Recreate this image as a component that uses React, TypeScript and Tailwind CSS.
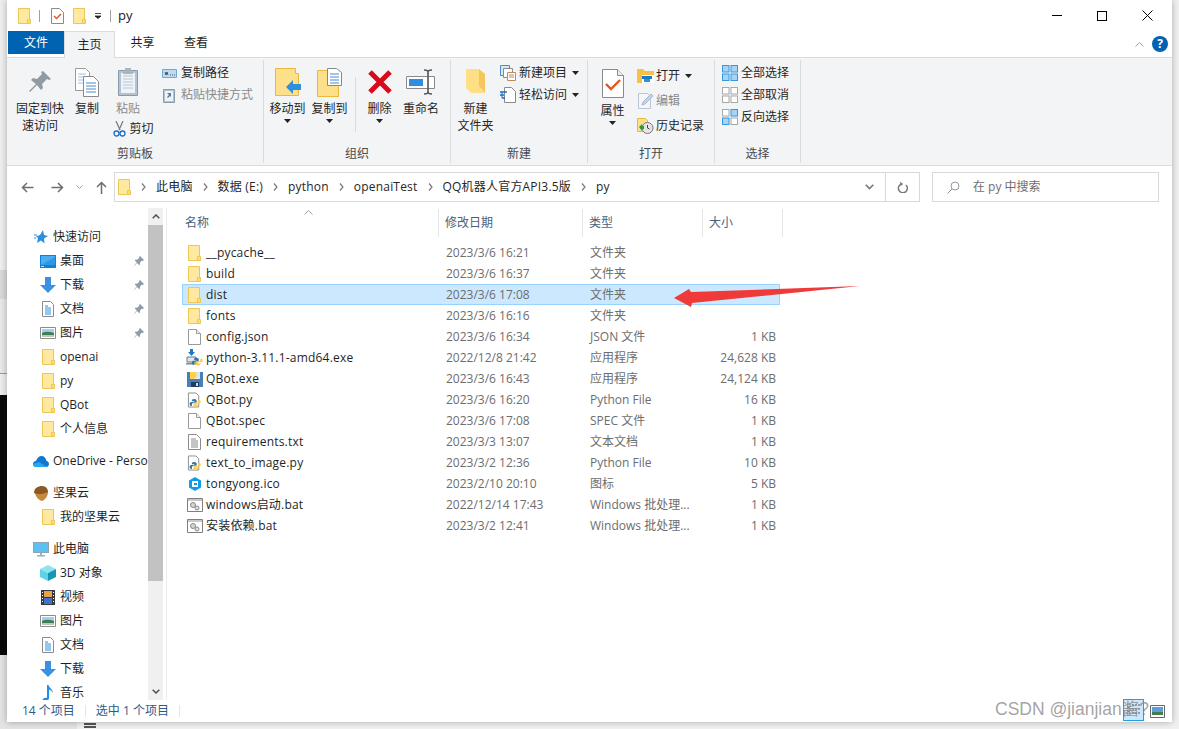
import React from 'react';

const Folder = ({ className = 'w-[13px] h-[16px]' }: { className?: string }) => (
  <svg className={className} viewBox="0 0 13 16">
    <path d="M.5.500h11v15H.5z" fill="#ffe9a0" stroke="#efc653" />
    <path d="M9.500 11.500h3v4h-3z" fill="#ffdc6e" stroke="#efc653" />
  </svg>
);

const Doc = () => (
  <svg className="w-[13px] h-[16px]" viewBox="0 0 13 16">
    <path d="M.5.500h8l4 4v11H.5z" fill="#fff" stroke="#9a9a9a" />
    <path d="M8.500.500v4h4" fill="#eee" stroke="#9a9a9a" />
  </svg>
);

const TextDoc = () => (
  <svg className="w-[13px] h-[16px]" viewBox="0 0 13 16">
    <path d="M.5.500h8l4 4v11H.5z" fill="#fff" stroke="#8a8a8a" />
    <path d="M3 5h5M3 7h7M3 9h7M3 11h7M3 13h7" stroke="#8a8a8a" />
  </svg>
);

const PySnake = () => (
  <>
    <path d="M7 6c-3 0-3 1-3 2v1h3v1H3c-1 0-2 1-2 2.500S2 15 3 15h1v-2c0-1 1-2 2-2h3c1 0 1-1 1-1V8c0-1-1-2-3-2z" fill="#3a76a8" />
    <path d="M9 16c3 0 3-1 3-2v-1H9v-1h4c1 0 2-1 2-2.500S14 7 13 7h-1v2c0 1-1 2-2 2H7c-1 0-1 1-1 1v2c0 1 1 2 3 2z" fill="#fdd04a" />
  </>
);

const PyDoc = () => (
  <svg className="w-[15px] h-[16px]" viewBox="0 0 16 16">
    <path d="M1.500.5h8l3 3v12h-11z" fill="#fff" stroke="#8a8a8a" />
    <g transform="translate(1 0) scale(.85) translate(1 2)">
      <PySnake />
    </g>
  </svg>
);

const PyInstaller = () => (
  <svg className="w-[17px] h-[17px]" viewBox="0 0 17 17">
    <path d="M1 8h9v5H1z" fill="#dfe6ec" stroke="#6a7a88" />
    <path d="M0 14h11v1.500H0z" fill="#7d8b96" />
    <path d="M4 0h3v3h2L5.500 7 2 3h2z" fill="#1c78c8" />
    <g transform="translate(5 4) scale(.78)">
      <PySnake />
    </g>
  </svg>
);

const ExeIcon = () => (
  <svg className="w-[16px] h-[16px]" viewBox="0 0 16 16">
    <path d="M0 1h16v15H0z" fill="#4a7fb5" />
    <path d="M3 1h10v7H3z" fill="#dde8f3" />
    <path d="M3 1h6l1 4-3 3H3z" fill="#ffd24d" />
    <path d="M4 11h8v5H4z" fill="#1d3f66" />
    <path d="M9 12h2v3H9z" fill="#cfd8e2" />
  </svg>
);

const IcoIcon = () => (
  <svg className="w-[14px] h-[14px]" viewBox="0 0 14 14">
    <path d="M7 0l6 3.500v7L7 14l-6-3.500v-7z" fill="#0f9be8" />
    <path d="M4 4h6v6H4z" fill="#fff" />
    <path d="M6 6h3v2H6z" fill="#0f9be8" />
  </svg>
);

const BatIcon = () => (
  <svg className="w-[16px] h-[14px]" viewBox="0 0 16 14">
    <path d="M.5.500h15v13H.5z" fill="#fff" stroke="#7f7f7f" />
    <path d="M1 1h14v2H1z" fill="#c9c9c9" />
    <circle cx="6" cy="7" r="2.500" fill="#d5d5d5" stroke="#888" />
    <circle cx="10" cy="10" r="2" fill="#e2e2e2" stroke="#888" />
  </svg>
);

const Star = () => (
  <svg className="w-[14px] h-[14px]" viewBox="0 0 14 14">
    <path d="M9 0l1 5 4 1-4 2.500.5 5L7 10.500 3 13l1-5L2 6.500 6 5z" fill="#2a8fe0" />
    <path d="M0 5h3M0 8h2" stroke="#2a8fe0" />
  </svg>
);

const DesktopIcon = () => (
  <svg className="w-[16px] h-[13px]" viewBox="0 0 16 13">
    <path d="M0 0h16v13H0z" fill="#0f7fdc" />
    <path d="M1 1h14v9H1z" fill="#49aef2" />
    <path d="M1 10l14-8v8z" fill="#2e97e6" />
    <path d="M1 11h3v1H1z" fill="#cbe6fb" />
  </svg>
);

const DownloadIcon = () => (
  <svg className="w-[16px] h-[16px]" viewBox="0 0 16 16">
    <path d="M5 0h6v8h5l-8 8-8-8h5z" fill="#3a90e3" />
  </svg>
);

const NavDoc = () => (
  <svg className="w-[12px] h-[16px]" viewBox="0 0 12 16">
    <path d="M.5.500h8l3 3v12H.5z" fill="#fff" stroke="#8c8c8c" />
    <path d="M3 5h3M3 7h6M3 9h6M3 11h6M3 13h6" stroke="#2a8fe0" />
  </svg>
);

const PictureIcon = () => (
  <svg className="w-[16px] h-[12px]" viewBox="0 0 16 12">
    <path d="M.5.500h15v11H.5z" fill="#fff" stroke="#8c8c8c" />
    <path d="M2 2h12v4H2z" fill="#a9cdee" />
    <path d="M2 6c4-2 8-1 12 0v2H2z" fill="#3f7d55" />
    <path d="M2 8h12v2H2z" fill="#b9c9b4" />
  </svg>
);

const Cloud = () => (
  <svg className="w-[16px] h-[11px]" viewBox="0 0 16 11">
    <path d="M3 11C1 11 0 9.500 0 8s1-3 3-3c1-3 3-5 5.500-5S13 2 13.500 5C15 5 16 6.500 16 8s-1 3-3 3z" fill="#0f78d4" />
    <path d="M3 11C1 11 0 9.500 0 8l6-2 8 5z" fill="#28a8ea" />
  </svg>
);

const Acorn = () => (
  <svg className="w-[16px] h-[16px]" viewBox="0 0 16 16">
    <path d="M2 7c0 5 5 9 7 9 3-1 6-5 6-9z" fill="#c58a3b" />
    <path d="M1 8c0-5 4-7 8-7s6 3 6 6c-4 2-10 3-14 1z" fill="#8a5a26" />
  </svg>
);

const PcIcon = () => (
  <svg className="w-[16px] h-[15px]" viewBox="0 0 16 15">
    <path d="M0 0h16v11H0z" fill="#8ea4b5" />
    <path d="M1 1h14v9H1z" fill="#5cc0f4" />
    <path d="M7 11h2v2H7zM4 13h8v1.500H4z" fill="#9fb0bd" />
  </svg>
);

const Cube = () => (
  <svg className="w-[16px] h-[16px]" viewBox="0 0 16 16">
    <path d="M8 0l8 4-8 4-8-4z" fill="#8be4ef" />
    <path d="M0 4l8 4v8l-8-4z" fill="#5fd2e3" />
    <path d="M16 4L8 8v8l8-4z" fill="#1597b4" />
  </svg>
);

const Film = () => (
  <svg className="w-[14px] h-[15px]" viewBox="0 0 14 15">
    <path d="M0 0h14v15H0z" fill="#3a3a3a" />
    <path d="M3 1h8v6H3z" fill="#e6a44a" />
    <path d="M3 8h8v6H3z" fill="#3f72c9" />
    <path d="M1 2h1v1H1zM1 5h1v1H1zM1 8h1v1H1zM1 11h1v1H1zM12 2h1v1h-1zM12 5h1v1h-1zM12 8h1v1h-1zM12 11h1v1h-1z" fill="#fff" />
  </svg>
);

const Music = () => (
  <svg className="w-[12px] h-[16px]" viewBox="0 0 12 16">
    <path d="M5 0h1.500c.5 3 4.500 4 4.500 8-1-2-2.500-3-4-3.500V13c0 2-2 3-4.500 3C1 16 0 15 1 14c1-1 3-1.500 4-1z" fill="#1c8fe8" />
  </svg>
);

const Caret = ({ className = '' }: { className?: string }) => (
  <svg className={`w-[7px] h-[4px] ${className}`} viewBox="0 0 7 4">
    <path d="M0 0h7L3.500 4z" fill="#222" />
  </svg>
);

const Crumb = () => (
  <svg className="w-[5px] h-[8px] mx-[10px]" viewBox="0 0 5 8">
    <path d="M1 .5L4 4 1 7.500" fill="none" stroke="#7a7a7a" strokeWidth="1.200" />
  </svg>
);

const PinSmall = () => (
  <svg className="w-[10px] h-[10px]" viewBox="0 0 10 10">
    <path d="M6 0l4 4-1 1-1-.5-2 2 .2 1.800-1 .7L3 7 0 10l-.2-.2L2.800 6.500.8 4.500l.7-1 1.800.2 2-2L5 1z" fill="#8e9aa6" />
  </svg>
);

const Grid4 = ({ fills }: { fills: string[] }) => (
  <svg className="w-[16px] h-[16px]" viewBox="0 0 16 16">
    {[[0, 0], [8.500, 0], [0, 8.500], [8.500, 8.500]].map(([x, y], i) => (
      <rect key={i} x={x + 0.5} y={y + 0.5} width="6.500" height="6.500" fill={fills[i]} stroke={fills[i] === '#fff' ? '#a8a8a8' : '#3a96dd'} />
    ))}
  </svg>
);

const Big = ({ w, icon, lines, caret, dim }: { w: string; icon: React.ReactNode; lines: string[]; caret?: boolean; dim?: boolean }) => (
  <div className={`${w} flex flex-col items-center shrink-0`}>
    <div className="h-[36px] flex items-center justify-center">{icon}</div>
    {lines.map((l) => (
      <div key={l} className={`leading-[17px] whitespace-nowrap ${dim ? 'text-[#8a8a8a]' : 'text-[#262626]'}`}>{l}</div>
    ))}
    {caret && <Caret className="mt-[2px]" />}
  </div>
);

const Small = ({ icon, label, caret, dim, h = 'h-[22px]' }: { icon: React.ReactNode; label: string; caret?: boolean; dim?: boolean; h?: string }) => (
  <div className={`flex items-center ${h} whitespace-nowrap ${dim ? 'text-[#8a8a8a]' : 'text-[#262626]'}`}>
    <span className="w-[19px] flex justify-start shrink-0">{icon}</span>
    <span>{label}</span>
    {caret && <Caret className="ml-[5px]" />}
  </div>
);

const Group = ({ w, label, children }: { w: string; label: string; children: React.ReactNode }) => (
  <div className={`${w} shrink-0 flex flex-col border-r border-[#dadbdc] my-[2px]`}>
    <div className="flex-1 flex pt-[4px]">{children}</div>
    <div className="h-[18px] text-center leading-[18px] text-[#4a4a4a]">{label}</div>
  </div>
);

const rows: { name: string; date: string; type: string; size?: string; icon: React.ReactNode; sel?: boolean }[] = [
  { name: '__pycache__', date: '2023/3/6 16:21', type: '文件夹', icon: <Folder /> },
  { name: 'build', date: '2023/3/6 16:37', type: '文件夹', icon: <Folder /> },
  { name: 'dist', date: '2023/3/6 17:08', type: '文件夹', icon: <Folder />, sel: true },
  { name: 'fonts', date: '2023/3/6 16:16', type: '文件夹', icon: <Folder /> },
  { name: 'config.json', date: '2023/3/6 16:34', type: 'JSON 文件', size: '1 KB', icon: <Doc /> },
  { name: 'python-3.11.1-amd64.exe', date: '2022/12/8 21:42', type: '应用程序', size: '24,628 KB', icon: <PyInstaller /> },
  { name: 'QBot.exe', date: '2023/3/6 16:43', type: '应用程序', size: '24,124 KB', icon: <ExeIcon /> },
  { name: 'QBot.py', date: '2023/3/6 16:20', type: 'Python File', size: '16 KB', icon: <PyDoc /> },
  { name: 'QBot.spec', date: '2023/3/6 17:08', type: 'SPEC 文件', size: '1 KB', icon: <Doc /> },
  { name: 'requirements.txt', date: '2023/3/3 13:07', type: '文本文档', size: '1 KB', icon: <TextDoc /> },
  { name: 'text_to_image.py', date: '2023/3/2 12:36', type: 'Python File', size: '10 KB', icon: <PyDoc /> },
  { name: 'tongyong.ico', date: '2023/2/10 20:10', type: '图标', size: '5 KB', icon: <IcoIcon /> },
  { name: 'windows启动.bat', date: '2022/12/14 17:43', type: 'Windows 批处理...', size: '1 KB', icon: <BatIcon /> },
  { name: '安装依赖.bat', date: '2023/3/2 12:41', type: 'Windows 批处理...', size: '1 KB', icon: <BatIcon /> },
];

const NavItem = ({ icon, label, pin, top }: { icon: React.ReactNode; label: string; pin?: boolean; top?: boolean }) => (
  <div className={`h-[24px] flex items-center whitespace-nowrap text-[#1f1f1f] ${top ? 'pl-[24px]' : 'pl-[33px]'}`}>
    <span className={`${top ? 'w-[20px] mr-[2px]' : 'w-[16px] mr-[4px]'} flex justify-center shrink-0`}>{icon}</span>
    <span>{label}</span>
    {pin && <span className="ml-auto mr-[4px]"><PinSmall /></span>}
  </div>
);

export default function App() {
  return (
    <div className="relative w-[1179px] h-[729px] overflow-hidden bg-[#f1f1f1] font-['Open_Sans','Noto_Sans_CJK_SC',sans-serif] text-[12px]">
      <div className="flex h-[722px]">
        {/* what shows of the desktop behind the window */}
        <div className="w-[7px] flex flex-col shrink-0">
          <div className="h-[270px] bg-[#efefef]" />
          <div className="h-[29px] bg-[#d9d9d9]" />
          <div className="h-[74px] bg-[#e9e9e9]" />
          <div className="h-[22px] bg-[#eeeeee] border-t border-[#9a9a9a]" />
          <div className="h-[260px] bg-[#0a0a0a]" />
          <div className="flex-1 bg-[#e4e4e4]" />
        </div>

        <div className="w-[1165px] relative bg-white flex flex-col shadow-[0_0_7px_rgba(0,0,0,0.3)]">
          {/* title bar */}
          <div className="h-[31px] flex items-center shrink-0">
            <div className="pl-[11px] flex items-center">
              <Folder className="w-[13px] h-[16px]" />
              <span className="w-px h-[12px] bg-[#a0a0a0] ml-[8px] mr-[11px]" />
              <svg className="w-[13px] h-[16px]" viewBox="0 0 13 16">
                <path d="M.5.500h8l4 4v11H.5z" fill="#fff" stroke="#8a8a8a" />
                <path d="M3 8l2.500 2.500L10 6" fill="none" stroke="#e0562a" strokeWidth="1.500" />
              </svg>
              <span className="w-[9px]" />
              <Folder className="w-[13px] h-[16px]" />
              <svg className="w-[8px] h-[6px] ml-[8px]" viewBox="0 0 8 6">
                <path d="M1 .5h6M1 3h6L4 5.500z" stroke="#222" fill="#222" strokeWidth=".8" />
              </svg>
              <span className="w-px h-[12px] bg-[#a0a0a0] ml-[8px] mr-[7px]" />
              <span className="text-[13px] text-[#1a1a1a]">py</span>
            </div>
            <div className="ml-auto flex items-center">
              <div className="w-[45px] flex justify-center"><span className="w-[10px] h-px bg-black" /></div>
              <div className="w-[45px] flex justify-center"><span className="w-[10px] h-[10px] border border-black" /></div>
              <div className="w-[46px] flex justify-center mr-[2px]">
                <svg className="w-[11px] h-[11px]" viewBox="0 0 11 11"><path d="M.5.500l10 10M10.500.500l-10 10" stroke="#000" /></svg>
              </div>
            </div>
          </div>

          {/* tabs */}
          <div className="h-[26px] flex items-start shrink-0 relative">
            <div className="ml-[1px] w-[56px] h-[23px] bg-[#0063b1] text-white flex items-center justify-center">文件</div>
            <div className="w-[51px] h-[27px] relative z-10 bg-[#f3f4f6] border border-b-0 border-[#dadbdc] flex items-center justify-center text-[#1f1f1f]">主页</div>
            <div className="w-[55px] h-[23px] flex items-center justify-center text-[#1f1f1f]">共享</div>
            <div className="w-[52px] h-[23px] flex items-center justify-center text-[#1f1f1f]">查看</div>
            <div className="ml-auto flex items-center h-[26px] pr-[4px]">
              <svg className="w-[9px] h-[5px] mr-[8px]" viewBox="0 0 9 5"><path d="M.5 4.500l4-4 4 4" fill="none" stroke="#9a9a9a" /></svg>
              <span className="w-[16px] h-[16px] rounded-full bg-[#0063b1] text-white text-[12px] font-bold flex items-center justify-center">?</span>
            </div>
          </div>

          {/* ribbon */}
          <div className="h-[109px] flex shrink-0 bg-[#f3f4f6] border-y border-[#dadbdc]">
            <Group w="w-[257px]" label="剪贴板">
              <span className="w-[9px]" />
              <Big w="w-[48px]" lines={['固定到快', '速访问']} icon={
                <svg className="w-[24px] h-[24px]" viewBox="0 0 24 24">
                  <path d="M15 1l8 8-2 1-2-1-5 5 1 4-2 2-4-5-7 7-1-1 7-7-5-4 2-2 4 1 5-5-1-2z" fill="#8f9aa3" />
                </svg>
              } />
              <Big w="w-[46px]" lines={['复制']} icon={
                <svg className="w-[24px] h-[29px]" viewBox="0 0 24 29">
                  <path d="M.5.500h10l4 4v18H.5z" fill="#fff" stroke="#9a9a9a" />
                  <path d="M3 6h8M3 9h8M3 12h8M3 15h8" stroke="#9cc2e8" />
                  <path d="M8.500 8.500h10l5 5v15h-15z" fill="#fff" stroke="#8a8a8a" />
                  <path d="M11 15h10M11 18h10M11 21h10M11 24h10" stroke="#4a8bd0" />
                </svg>
              } />
              <div className="w-[36px] flex flex-col items-center shrink-0 text-[#8a8a8a]">
                <div className="h-[36px] flex items-center justify-center">
                  <svg className="w-[20px] h-[28px]" viewBox="0 0 20 28">
                    <path d="M.5 2.500h19v25H.500z" fill="#b3c3d3" stroke="#8a9aaa" />
                    <path d="M3 5h14v20H3z" fill="#eef3f8" />
                    <path d="M5 8h10M5 11h10M5 14h10M5 17h10M5 20h10" stroke="#b8c6d6" />
                    <path d="M7 0h6v4h2v2H5V4h2z" fill="#aab4bf" />
                  </svg>
                </div>
                <div className="leading-[17px]">粘贴</div>
                <div className="leading-[17px] flex items-center mt-[3px] whitespace-nowrap text-[#262626] ml-[10px]">
                  <svg className="w-[13px] h-[16px] mr-[4px]" viewBox="0 0 13 16">
                    <path d="M3 0l4 9M10 0L6 9" stroke="#777" strokeWidth="1.200" />
                    <circle cx="3.500" cy="12.500" r="2.500" fill="none" stroke="#1c6fc4" strokeWidth="1.300" />
                    <circle cx="9.500" cy="12.500" r="2.500" fill="none" stroke="#1c6fc4" strokeWidth="1.300" />
                  </svg>
                  剪切
                </div>
              </div>
              <div className="ml-[16px] -mt-[2px]">
                <Small label="复制路径" icon={
                  <svg className="w-[15px] h-[9px]" viewBox="0 0 15 9"><path d="M.5.500h14v8H.5z" fill="#bcdcf5" stroke="#6fa8d8" /><path d="M3 3l1 3 1-3 1 3M8 6h1M10 6h1M12 6h1" stroke="#333" strokeWidth=".8" fill="none" /></svg>
                } />
                <Small dim label="粘贴快捷方式" icon={
                  <svg className="w-[12px] h-[15px] ml-[1px]" viewBox="0 0 12 15"><path d="M.5 1.500h11v13H.5z" fill="#b3c3d3" stroke="#8a9aaa" /><path d="M2 3h8v10H2z" fill="#eef3f8" /><path d="M4 5h4v4L7 8l-2 2-1-1 2-2z" fill="#5d7a99" /></svg>
                } />
              </div>
            </Group>

            <Group w="w-[187px]" label="组织">
              <span className="w-[2px]" />
              <Big w="w-[43px]" caret lines={['移动到']} icon={
                <svg className="w-[26px] h-[29px]" viewBox="0 0 26 29">
                  <path d="M.5.500h20v5h3v22H.5z" fill="#ffe08a" stroke="#e8b93a" />
                  <path d="M11 19l7-7v4h8v6h-8v4z" fill="#2e8fdc" />
                </svg>
              } />
              <Big w="w-[41px]" caret lines={['复制到']} icon={
                <svg className="w-[26px] h-[29px]" viewBox="0 0 26 29">
                  <path d="M.5 2.500h21v26H.5z" fill="#ffe08a" stroke="#e8b93a" />
                  <path d="M10.500.500h9l5 4v13h-14z" fill="#fff" stroke="#888" />
                  <path d="M13 6h9M13 9h9M13 12h9M13 15h9" stroke="#4a8bd0" />
                </svg>
              } />
              <span className="w-px h-[55px] bg-[#dadbdc] mt-[13px] ml-[5px] mr-[1px]" />
              <Big w="w-[45px]" caret lines={['删除']} icon={
                <svg className="w-[26px] h-[26px]" viewBox="0 0 26 26">
                  <path d="M3 3l20 20M23 3L3 23" stroke="#d60a18" strokeWidth="5" />
                </svg>
              } />
              <Big w="w-[38px]" lines={['重命名']} icon={
                <svg className="w-[30px] h-[26px]" viewBox="0 0 30 26">
                  <path d="M.5 7.500h28v12H.5z" fill="#fff" stroke="#8a8a8a" />
                  <path d="M3 10h14v7H3z" fill="#2e8fe0" />
                  <path d="M18 1c3 0 4 1 4 2 0-1 1-2 4-2M22 3v20M18 25c3 0 4-1 4-2 0 1 1 2 4 2" fill="none" stroke="#555" strokeWidth="1.600" />
                </svg>
              } />
            </Group>

            <Group w="w-[137px]" label="新建">
              <Big w="w-[49px]" lines={['新建', '文件夹']} icon={
                <svg className="w-[20px] h-[28px]" viewBox="0 0 20 28">
                  <path d="M0 1h13v17l6 7H5L0 20z" fill="#ffdf85" />
                  <path d="M13 1l6 5v19l-6-7z" fill="#f5c75a" />
                </svg>
              } />
              <div className="-mt-[2px]">
                <Small caret label="新建项目" icon={
                  <svg className="w-[16px] h-[16px]" viewBox="0 0 16 16"><path d="M.5.500h9v10h-9z" fill="#d9e8f5" stroke="#4a8bd0" /><path d="M3.500 3.500h9v9h-9z" fill="#fff" stroke="#8a8a8a" /><path d="M7.500 7.500h8v8h-8z" fill="#fff" stroke="#c08a5a" /><path d="M9 10h5M9 12h5" stroke="#c08a5a" /></svg>
                } />
                <Small caret label="轻松访问" icon={
                  <svg className="w-[16px] h-[16px]" viewBox="0 0 16 16"><path d="M4.500.500h7l4 4v11h-11z" fill="#fff" stroke="#8a8a8a" /><path d="M0 5h7M0 8h4M2 11h3" stroke="#1c6fc4" strokeWidth="1.300" /><path d="M2 5v6" stroke="#1c6fc4" /></svg>
                } />
              </div>
            </Group>

            <Group w="w-[127px]" label="打开">
              <div className="w-[49px] flex flex-col items-center shrink-0 text-[#262626]">
                <div className="h-[38px] flex items-center justify-center">
                  <svg className="w-[22px] h-[29px]" viewBox="0 0 22 29" >
                    <path d="M.5.500h15l6 6v22H.5z" fill="#fff" stroke="#8a8a8a" />
                    <path d="M15.500.500v6h6" fill="#eee" stroke="#8a8a8a" />
                    <path d="M4 15l5 5 9-9" fill="none" stroke="#e8541e" strokeWidth="2.400" />
                  </svg>
                </div>
                <div className="leading-[17px]">属性</div>
                <Caret className="mt-[2px]" />
              </div>
              <div className="-mt-[1px]">
                <Small caret h="h-[25px]" label="打开" icon={
                  <svg className="w-[17px] h-[14px]" viewBox="0 0 17 14"><path d="M0 0h6l2 2h9v12H0z" fill="#f5c243" /><path d="M5 6h12v8H5z" fill="#fff" /><path d="M5 7h10v3H5z" fill="#1c78c8" /><path d="M7 10h6v3H7z" fill="#2e8fdc" /></svg>
                } />
                <Small dim h="h-[25px]" label="编辑" icon={
                  <svg className="w-[15px] h-[16px] ml-[1px]" viewBox="0 0 15 16"><path d="M.5.500h9l3 3v12H.5z" fill="#f4f6fa" stroke="#b9c5d6" /><path d="M4 12l1-3 8-8 2 2-8 8z" fill="#c7d3e6" stroke="#aab8cd" /></svg>
                } />
                <Small h="h-[26px]" label="历史记录" icon={
                  <svg className="w-[17px] h-[16px]" viewBox="0 0 17 16"><path d="M.5.500h8l2 2v11H.5z" fill="#ffe08a" stroke="#e8b93a" /><circle cx="10.500" cy="10" r="5.500" fill="#e5e5e5" stroke="#777" /><path d="M10.500 7v3l2 1" fill="none" stroke="#444" /><path d="M2 9l3-3v2h2v3H5v2z" fill="#2c9a3c" /></svg>
                } />
              </div>
            </Group>

            <Group w="w-[86px]" label="选择">
              <div className="-mt-[2px] pl-[7px]">
                <Small label="全部选择" icon={<Grid4 fills={['#a6d4f5', '#a6d4f5', '#a6d4f5', '#a6d4f5']} />} />
                <Small label="全部取消" icon={<Grid4 fills={['#fff', '#fff', '#fff', '#fff']} />} />
                <Small label="反向选择" icon={<Grid4 fills={['#fff', '#a6d4f5', '#a6d4f5', '#fff']} />} />
              </div>
            </Group>
          </div>

          {/* address row */}
          <div className="h-[42px] shrink-0 flex items-center text-[#262626]">
            <div className="w-[107px] shrink-0 flex items-center text-[#6e6e6e]">
              <svg className="w-[13px] h-[11px] ml-[14px]" viewBox="0 0 13 11"><path d="M12.500 5.500H1.500M6 1L1.500 5.500 6 10" fill="none" stroke="#6e6e6e" strokeWidth="1.500" /></svg>
              <svg className="w-[13px] h-[11px] ml-[17px]" viewBox="0 0 13 11"><path d="M.5 5.500h11M7 1l4.500 4.500L7 10" fill="none" stroke="#6e6e6e" strokeWidth="1.500" /></svg>
              <svg className="w-[7px] h-[5px] ml-[12px]" viewBox="0 0 7 5"><path d="M.5.500l3 3 3-3" fill="none" stroke="#a0a0a0" /></svg>
              <svg className="w-[11px] h-[13px] ml-[13px]" viewBox="0 0 11 13"><path d="M5.500 13V1.500M1 6l4.500-4.500L10 6" fill="none" stroke="#6e6e6e" strokeWidth="1.500" /></svg>
            </div>
            <div className="w-[806px] h-[30px] shrink-0 flex items-center border border-[#d9d9d9] pl-[3px] tracking-[0.2px]">
              <Folder className="w-[13px] h-[16px]" />
              <Crumb /><span>此电脑</span>
              <Crumb /><span>数据 (E:)</span>
              <Crumb /><span>python</span>
              <Crumb /><span>openaiTest</span>
              <Crumb /><span>QQ机器人官方API3.5版</span>
              <Crumb /><span>py</span>
              <div className="ml-auto flex items-center h-full">
                <svg className="w-[9px] h-[6px] mr-[11px]" viewBox="0 0 9 6"><path d="M.7.700L4.500 4.500 8.300.700" fill="none" stroke="#7a7a7a" strokeWidth="1.600" /></svg>
                <div className="w-[34px] h-full border-l border-[#d9d9d9] flex items-center justify-center">
                  <svg className="w-[11px] h-[12px]" viewBox="0 0 11 12"><path d="M3 1.500l2 1.500-2 1.500M4.500 3A4.500 4.500 0 1 0 9 4" fill="none" stroke="#7a7a7a" strokeWidth="1.500" /></svg>
                </div>
              </div>
            </div>
            <div className="w-[227px] h-[30px] ml-[12px] shrink-0 flex items-center border border-[#d9d9d9] pl-[14px] text-[#6e6e6e]">
              <svg className="w-[13px] h-[13px] mr-[13px]" viewBox="0 0 13 13"><circle cx="8" cy="5" r="4" fill="none" stroke="#9a9a9a" /><path d="M5 8l-4.500 4.500" stroke="#b08a6a" /></svg>
              在 py 中搜索
            </div>
          </div>

          {/* body */}
          <div className="flex-1 flex min-h-0">
            <div className="w-[141px] shrink-0 overflow-hidden pt-[17px]">
              <NavItem top icon={<Star />} label="快速访问" />
              <NavItem pin icon={<DesktopIcon />} label="桌面" />
              <NavItem pin icon={<DownloadIcon />} label="下载" />
              <NavItem pin icon={<NavDoc />} label="文档" />
              <NavItem pin icon={<PictureIcon />} label="图片" />
              <NavItem icon={<Folder />} label="openai" />
              <NavItem icon={<Folder />} label="py" />
              <NavItem icon={<Folder />} label="QBot" />
              <NavItem icon={<Folder />} label="个人信息" />
              <div className="h-[8px]" />
              <NavItem top icon={<Cloud />} label="OneDrive - Personal" />
              <div className="h-[8px]" />
              <NavItem top icon={<Acorn />} label="坚果云" />
              <NavItem icon={<Folder />} label="我的坚果云" />
              <div className="h-[8px]" />
              <NavItem top icon={<PcIcon />} label="此电脑" />
              <NavItem icon={<Cube />} label="3D 对象" />
              <NavItem icon={<Film />} label="视频" />
              <NavItem icon={<PictureIcon />} label="图片" />
              <NavItem icon={<NavDoc />} label="文档" />
              <NavItem icon={<DownloadIcon />} label="下载" />
              <NavItem icon={<Music />} label="音乐" />
            </div>

            {/* nav scrollbar */}
            <div className="w-[15px] shrink-0 bg-[#f0f0f0] flex flex-col">
              <div className="h-[17px] flex items-center justify-center">
                <svg className="w-[8px] h-[5px]" viewBox="0 0 8 5"><path d="M.7 4.300L4 1l3.300 3.300" fill="none" stroke="#505050" strokeWidth="1.500" /></svg>
              </div>
              <div className="h-[356px] bg-[#c2c2c2]" />
              <div className="flex-1" />
              <div className="h-[17px] flex items-center justify-center">
                <svg className="w-[8px] h-[5px]" viewBox="0 0 8 5"><path d="M.7.700L4 4l3.300-3.300" fill="none" stroke="#505050" strokeWidth="1.500" /></svg>
              </div>
            </div>

            <div className="w-[4px] shrink-0 border-r border-[#ececec]" />

            {/* file list */}
            <div className="flex-1 min-w-0 relative">
              <div className="flex h-[28px] text-[#4c607a] mt-[1px]">
                <div className="w-[272px] border-r border-[#e5e5e5] pl-[18px] flex items-center">名称</div>
                <div className="w-[144px] border-r border-[#e5e5e5] pl-[6px] flex items-center">修改日期</div>
                <div className="w-[120px] border-r border-[#e5e5e5] pl-[6px] flex items-center">类型</div>
                <div className="w-[80px] border-r border-[#e5e5e5] pl-[6px] flex items-center">大小</div>
              </div>
              <svg className="absolute left-[137px] top-[2px] w-[9px] h-[5px]" viewBox="0 0 9 5"><path d="M.5 4.500l4-4 4 4" fill="none" stroke="#9a9a9a" /></svg>
              <div className="pt-[5px] pl-[15px]">
                {rows.map((r) => (
                  <div key={r.name} className={`w-[598px] h-[21px] flex items-center border whitespace-nowrap ${r.sel ? 'bg-[#cce8ff] border-[#99d1ff]' : 'border-transparent'}`}>
                    <span className="w-[23px] flex justify-center shrink-0">{r.icon}</span>
                    <span className="w-[240px] shrink-0 text-[#1f1f1f] tracking-[0.2px]">{r.name}</span>
                    <span className="w-[144px] shrink-0 text-[#6d6d6d]">{r.date}</span>
                    <span className="w-[116px] shrink-0 text-[#6d6d6d]">{r.type}</span>
                    <span className="w-[70px] shrink-0 text-right text-[#6d6d6d]">{r.size}</span>
                  </div>
                ))}
              </div>
            </div>
          </div>

          {/* status bar */}
          <div className="h-[22px] shrink-0 flex items-center text-[#2e5a8a] pl-[15px] relative">
            <span>14 个项目</span>
            <span className="w-px h-[12px] bg-[#e5e5e5] mx-[10px]" />
            <span>选中 1 个项目</span>
            <span className="w-px h-[12px] bg-[#e5e5e5] ml-[10px]" />
            <div className="ml-auto mr-[7px] flex items-center">
              <div className="w-[21px] h-[22px] bg-[#cce8ff] border border-[#26a0da] flex items-center justify-center -mt-[3px] mr-[1px]">
                <svg className="w-[13px] h-[13px]" viewBox="0 0 13 13"><path d="M0 1h3v3H0zM0 5h3v3H0zM0 9h3v3H0z" fill="#fff" stroke="#555" strokeWidth=".7" /><path d="M5 2h8M5 6h8M5 10h8" stroke="#555" strokeDasharray="2 1" /></svg>
              </div>
              <svg className="w-[15px] h-[13px] ml-[5px]" viewBox="0 0 15 13"><path d="M.5.500h14v12H.5z" fill="#fff" stroke="#666" /><path d="M2 2h11v5H2z" fill="#5aa0d8" /><path d="M2 7h11v3H2z" fill="#4a7a50" /></svg>
            </div>
            {/* CSDN watermark */}
            <span className="absolute left-[988px] top-[-2px] text-[17.5px] leading-[22px] text-[#8c8c8c]/80 font-['Liberation_Sans','Noto_Sans_CJK_SC',sans-serif] whitespace-nowrap">CSDN @jianjian酱?</span>
          </div>

          {/* red annotation arrow */}
          <svg className="absolute left-[660px] top-[280px] w-[200px] h-[32px]" viewBox="0 0 200 32">
            <path d="M7 18l15-9 2 3 169-6-168 17-1 4z" fill="#f03a3a" />
          </svg>
        </div>

        <div className="w-[7px] shrink-0 bg-[#f1f1f1]" />
      </div>

      {/* strip of the desktop under the window */}
      <div className="h-[7px] flex">
        <div className="w-[77px] bg-[#e4e4e4]" />
        <div className="w-[7px]" />
        <div className="w-[12px] flex flex-col gap-[1px] pt-[1px]">
          <span className="h-[2px] bg-[#555]" />
          <span className="h-[2px] bg-[#555]" />
        </div>
      </div>
    </div>
  );
}
